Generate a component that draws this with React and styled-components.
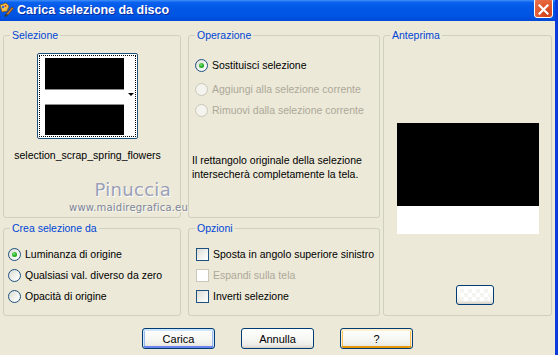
import React from "react";
import styled, { createGlobalStyle, css } from "styled-components";

const FS = "10.5px";

const Global = createGlobalStyle`
  html, body { margin: 0; padding: 0; background: #ECE9D8; }
  body { font-family: "Liberation Sans", Arial, sans-serif; font-size: ${FS}; color: #000; }
  * { box-sizing: border-box; }
`;

const Window = styled.div`
  width: 558px;
  height: 355px;
  overflow: hidden;
  background: #ECE9D8;
  border-right: 3px solid #0B3BDB;
  display: flex;
  flex-direction: column;
`;

const TitleBar = styled.div`
  height: 21px;
  flex: none;
  display: flex;
  align-items: flex-start;
  background: linear-gradient(to bottom, #3E8DF8 0%, #0A61EE 12%, #0258E6 40%, #0055E2 75%, #0048D8 100%);
`;

const AppIcon = styled.svg`
  width: 15px;
  height: 16px;
  margin-top: 2px;
  flex: none;
`;

const Title = styled.div`
  margin-left: 2px;
  margin-top: 3px;
  font-family: "Liberation Sans", Arial, sans-serif;
  font-weight: bold;
  font-size: 12.5px;
  line-height: 14px;
  color: #fff;
  text-shadow: 1px 1px 0 #0B2B9E;
`;

const CloseBtn = styled.div`
  margin-left: auto;
  margin-right: 2px;
  margin-top: -2px;
  width: 19px;
  height: 20px;
  border: 1px solid #fff;
  border-radius: 3px;
  background: radial-gradient(circle at 70% 80%, #C9401C 0%, #E2582E 45%, #E97856 100%);
  display: flex;
  align-items: center;
  justify-content: center;
  padding-top: 2px;
`;

const Body = styled.div`
  position: relative;
  flex: 1;
  padding: 8px 0 0 3px;
  display: flex;
  flex-direction: column;
`;

const Groups = styled.div`
  display: grid;
  grid-template-columns: 178px 7px 192px 3px 169px;
  grid-template-rows: 189px 94px;
  row-gap: 4px;
`;

const Group = styled.fieldset`
  margin: 0;
  padding: 0;
  min-width: 0;
  border: 1px solid #D0D0BF;
  border-radius: 3px;
  grid-column: ${(p) => p.$col};
  grid-row: ${(p) => p.$row};
  display: flex;
  flex-direction: column;
`;

const Legend = styled.legend`
  margin-left: 6px;
  padding: 0 2px;
  font-size: ${FS};
  line-height: 13px;
  color: #0046D5;
`;

const SelInner = styled.div`
  display: flex;
  flex-direction: column;
  align-items: center;
  padding: 11px 9px 0 0;
`;

const Thumb = styled.div`
  width: 101px;
  height: 86px;
  border: 1px solid #1C5180;
  border-radius: 2px;
  background: #fff;
  padding: 1px;
`;

const ThumbFocus = styled.div`
  width: 100%;
  height: 100%;
  border: 1px dotted #000;
  display: flex;
  padding: 2px 0 0 5px;
`;

const Stripes = styled.div`
  width: 79px;
  display: flex;
  flex-direction: column;
`;

const Stripe = styled.div`
  height: ${(p) => p.$h}px;
  background: ${(p) => p.$c};
  border-bottom: ${(p) => (p.$line ? "1px solid #8E8E8E" : "none")};
`;

const ArrowCol = styled.div`
  flex: 1;
  display: flex;
  align-items: flex-start;
  justify-content: flex-end;
  padding: 35px 1px 0 0;
`;

const Arrow = styled.div`
  width: 0;
  height: 0;
  border-left: 3px solid transparent;
  border-right: 3px solid transparent;
  border-top: 3px solid #000;
`;

const FileName = styled.div`
  margin-top: 10px;
  line-height: 13px;
  white-space: nowrap;
`;

const OpInner = styled.div`
  display: flex;
  flex-direction: column;
  padding: 13px 0 0 6px;
`;

const Row = styled.div`
  height: ${(p) => (p.$tall ? 24 : 21)}px;
  padding-bottom: ${(p) => (p.$tall ? 3 : 0)}px;
  display: flex;
  align-items: center;
  gap: 4px;
  white-space: nowrap;
  color: ${(p) => (p.$disabled ? "#ACA899" : "#000")};
  line-height: 13px;
`;

const RadioCircle = styled.span`
  width: 13px;
  height: 13px;
  flex: none;
  border-radius: 50%;
  border: 1px solid ${(p) => (p.$disabled ? "#CAC8BB" : "#1C5180")};
  background: ${(p) =>
    p.$disabled
      ? "#F4F3EE"
      : "linear-gradient(135deg, #DCDCD5 0%, #F2F2EE 55%, #FFFFFF 100%)"};
  display: flex;
  align-items: center;
  justify-content: center;
`;

const RadioDot = styled.span`
  width: 5px;
  height: 5px;
  border-radius: 50%;
  background: radial-gradient(circle at 40% 35%, #7CE07A 0%, #25B425 50%, #0F8A10 100%);
`;

const CheckSquare = styled.span`
  width: 13px;
  height: 13px;
  flex: none;
  border: 1px solid ${(p) => (p.$disabled ? "#CAC8BB" : "#1C5180")};
  background: ${(p) =>
    p.$disabled
      ? "#FFFFFF"
      : "linear-gradient(135deg, #DCDCD5 0%, #F2F2EE 55%, #FFFFFF 100%)"};
`;

const Note = styled.div`
  margin: 32px 0 0 -3px;
  line-height: 14px;
  white-space: nowrap;
`;

const SmallInner = styled.div`
  display: flex;
  flex-direction: column;
  padding: ${(p) => p.$pad};
`;

const PreviewInner = styled.div`
  display: flex;
  flex-direction: column;
  align-items: center;
  padding-top: 81px;
`;

const Preview = styled.div`
  width: 142px;
  display: flex;
  flex-direction: column;
`;

const PreviewBlock = styled.div`
  height: ${(p) => p.$h}px;
  background: ${(p) => p.$c};
`;

const xpButton = css`
  border: 1px solid #003C74;
  border-radius: 3px;
  background: linear-gradient(to bottom, #FFFFFF 0%, #F7F7F4 50%, #ECEBE6 85%, #D6D0C5 100%);
  font-family: "Liberation Sans", Arial, sans-serif;
  font-size: 11px;
  color: #000;
  display: flex;
  align-items: center;
  justify-content: center;
  padding: 0;
`;

const TinyButton = styled.div`
  ${xpButton};
  width: 38px;
  height: 20px;
  margin: 51px 0 0 15px;
  padding: 3px;
`;

const TinyPattern = styled.div`
  width: 100%;
  height: 100%;
  background-color: #F4F4F1;
  background-image: linear-gradient(45deg, #FFFFFF 25%, transparent 25%, transparent 75%, #FFFFFF 75%),
    linear-gradient(45deg, #FFFFFF 25%, transparent 25%, transparent 75%, #FFFFFF 75%);
  background-size: 8px 8px;
  background-position: 0 0, 4px 4px;
`;

const ButtonRow = styled.div`
  display: flex;
  justify-content: center;
  gap: 26px;
  margin-top: 12px;
  padding-right: 3px;
`;

const Button = styled.div`
  ${xpButton};
  width: 73px;
  height: 21px;
  ${(p) =>
    p.$variant === "default" &&
    css`
      box-shadow: inset 0 1px 0 1px #CEE7FF, inset 0 -1px 0 1px #6982EE, inset 1px 0 0 1px #9DB9EB, inset -1px 0 0 1px #9DB9EB;
    `}
  ${(p) =>
    p.$variant === "hot" &&
    css`
      box-shadow: inset 0 1px 0 1px #FFF0CF, inset 0 -1px 0 1px #E5970B, inset 1px 0 0 1px #F9C155, inset -1px 0 0 1px #F9C155;
    `}
`;

const Watermark = styled.div`
  position: absolute;
  left: 69px;
  top: 159px;
  display: flex;
  flex-direction: column;
  align-items: flex-end;
  pointer-events: none;
`;

const WmName = styled.div`
  font-family: "DejaVu Sans", sans-serif;
  font-size: 18px;
  line-height: 19px;
  letter-spacing: 0.3px;
  color: #9AA0B6;
  text-shadow: 1px 1px 0 #FFFFFF;
  margin-right: 17px;
`;

const WmUrl = styled.div`
  font-family: "DejaVu Sans", sans-serif;
  font-size: 10px;
  line-height: 11px;
  letter-spacing: 0.2px;
  color: #7E8599;
  text-shadow: 1px 1px 0 #F6F6F0;
  margin-top: 3px;
`;

function Radio({ checked, disabled, tall, children }) {
  return (
    <Row $disabled={disabled} $tall={tall}>
      <RadioCircle $disabled={disabled}>{checked && <RadioDot />}</RadioCircle>
      <span>{children}</span>
    </Row>
  );
}

function Check({ disabled, children }) {
  return (
    <Row $disabled={disabled}>
      <CheckSquare $disabled={disabled} />
      <span>{children}</span>
    </Row>
  );
}

export default function App() {
  return (
    <>
      <Global />
      <Window>
        <TitleBar>
          <AppIcon viewBox="0 0 15 16">
            <path d="M0 3 L6 1 L9 4 L7 9 L2 10 Z" fill="#F3C24A" stroke="#8A5A12" strokeWidth="0.8" />
            <circle cx="3" cy="5" r="1.2" fill="#2A6BE0" />
            <circle cx="5.5" cy="4" r="1" fill="#D23A2A" />
            <path d="M6 12 L12 5 L13.5 6.5 L8 13 Z" fill="#C87A2A" stroke="#5A3510" strokeWidth="0.6" />
            <path d="M4 14 L6 12 L8 13 L6 15 Z" fill="#3A3A3A" />
          </AppIcon>
          <Title>Carica selezione da disco</Title>
          <CloseBtn>
            <svg width="11" height="11" viewBox="0 0 11 11">
              <path d="M1.5 1.5 L9.5 9.5 M9.5 1.5 L1.5 9.5" stroke="#fff" strokeWidth="2.2" strokeLinecap="square" />
            </svg>
          </CloseBtn>
        </TitleBar>
        <Body>
          <Groups>
            <Group $col="1" $row="1">
              <Legend>Selezione</Legend>
              <SelInner>
                <Thumb>
                  <ThumbFocus>
                    <Stripes>
                      <Stripe $h={32} $c="#000" $line />
                      <Stripe $h={15} $c="#fff" $line />
                      <Stripe $h={30} $c="#000" />
                    </Stripes>
                    <ArrowCol>
                      <Arrow />
                    </ArrowCol>
                  </ThumbFocus>
                </Thumb>
                <FileName>selection_scrap_spring_flowers</FileName>
              </SelInner>
            </Group>
            <Group $col="3" $row="1">
              <Legend>Operazione</Legend>
              <OpInner>
                <Radio checked tall>Sostituisci selezione</Radio>
                <Radio disabled>Aggiungi alla selezione corrente</Radio>
                <Radio disabled>Rimuovi dalla selezione corrente</Radio>
                <Note>
                  Il rettangolo originale della selezione
                  <br />
                  intersecherà completamente la tela.
                </Note>
              </OpInner>
            </Group>
            <Group $col="5" $row="1 / span 2">
              <Legend>Anteprima</Legend>
              <PreviewInner>
                <Preview>
                  <PreviewBlock $h={83} $c="#000" />
                  <PreviewBlock $h={28} $c="#fff" />
                </Preview>
                <TinyButton>
                  <TinyPattern />
                </TinyButton>
              </PreviewInner>
            </Group>
            <Group $col="1" $row="2">
              <Legend>Crea selezione da</Legend>
              <SmallInner $pad="9px 0 0 4px">
                <Radio checked>Luminanza di origine</Radio>
                <Radio>Qualsiasi val. diverso da zero</Radio>
                <Radio>Opacità di origine</Radio>
              </SmallInner>
            </Group>
            <Group $col="3" $row="2">
              <Legend>Opzioni</Legend>
              <SmallInner $pad="9px 0 0 7px">
                <Check>Sposta in angolo superiore sinistro</Check>
                <Check disabled>Espandi sulla tela</Check>
                <Check>Inverti selezione</Check>
              </SmallInner>
            </Group>
          </Groups>
          <ButtonRow>
            <Button $variant="default">Carica</Button>
            <Button>Annulla</Button>
            <Button $variant="hot">?</Button>
          </ButtonRow>
          <Watermark>
            <WmName>Pinuccia</WmName>
            <WmUrl>www.maidiregrafica.eu</WmUrl>
          </Watermark>
        </Body>
      </Window>
    </>
  );
}
